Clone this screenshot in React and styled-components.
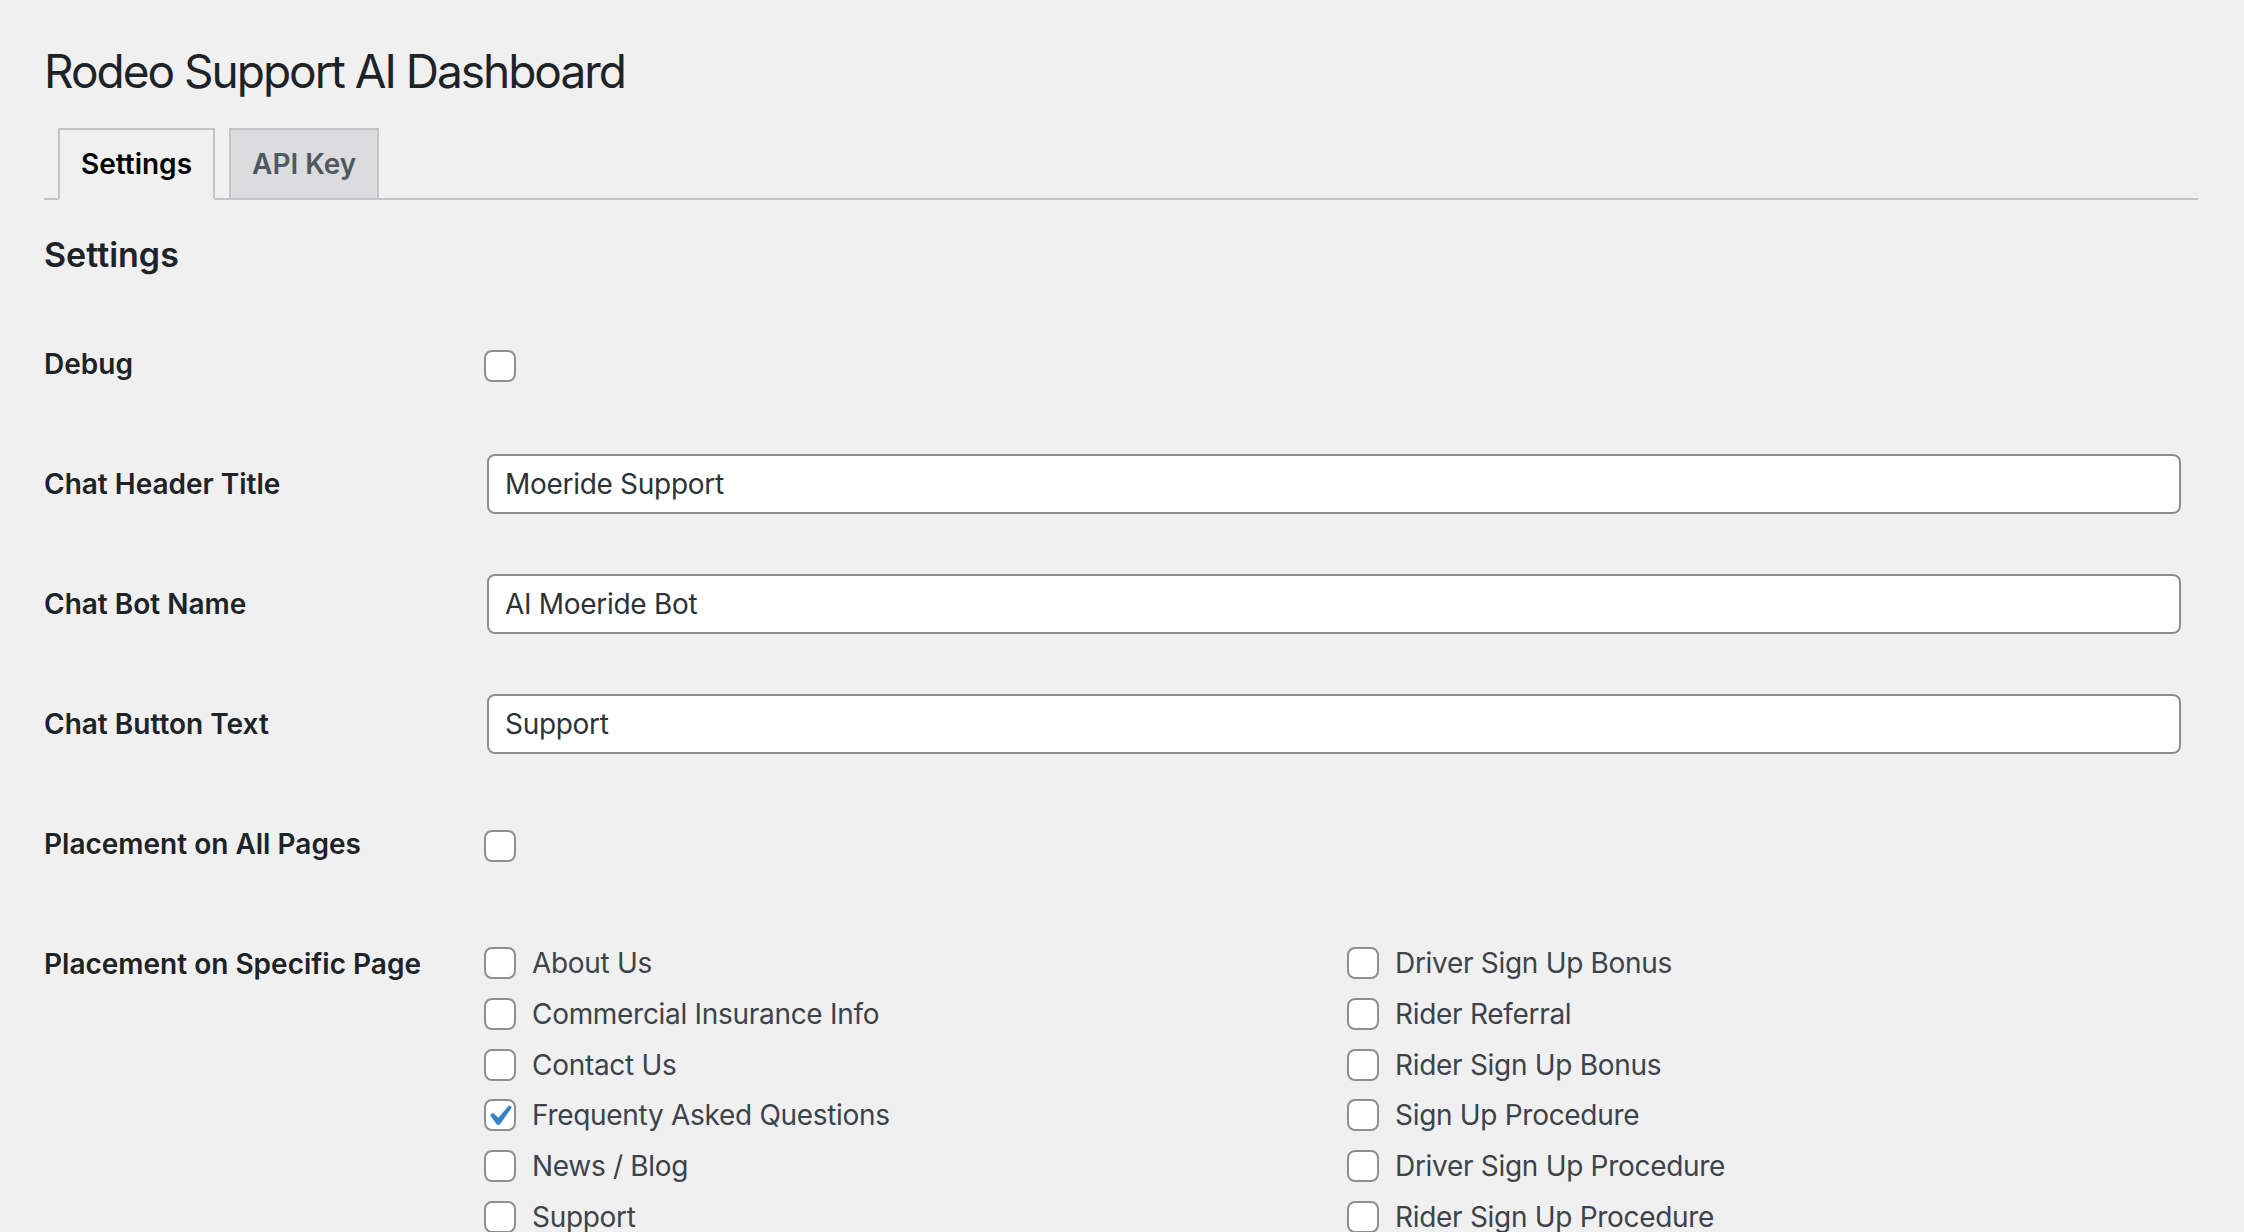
import styled, { createGlobalStyle } from 'styled-components';

const GlobalStyle = createGlobalStyle`
  html, body {
    margin: 0;
    background: #f0f0f1;
  }
  body {
    font-family: 'Inter', 'Liberation Sans', sans-serif;
    color: #3c434a;
  }
`;

const leftPages = [
  { name: 'About Us' },
  { name: 'Commercial Insurance Info' },
  { name: 'Contact Us' },
  { name: 'Frequenty Asked Questions', checked: true },
  { name: 'News / Blog' },
  { name: 'Support' },
];

const rightPages = [
  { name: 'Driver Sign Up Bonus' },
  { name: 'Rider Referral' },
  { name: 'Rider Sign Up Bonus' },
  { name: 'Sign Up Procedure' },
  { name: 'Driver Sign Up Procedure' },
  { name: 'Rider Sign Up Procedure' },
];

function Checkbox({ checked }) {
  return (
    <Box>
      {checked &&
        <Tick viewBox="0 0 20 20">
          <path d="M14.83 4.89l1.34.94-5.81 8.38H9.02L5.78 9.67l1.34-1.25 2.57 2.4z" fill="#3582c4" />
        </Tick>
      }
    </Box>
  );
}

function PageList({ pages }) {
  return (
    <Column>
      {pages.map((p) =>
        <Item key={p.name}>
          <Checkbox checked={p.checked} />
          <span>{p.name}</span>
        </Item>
      )}
    </Column>
  );
}

export default function App() {
  return (
    <>
      <GlobalStyle />
      <Wrap>
        <Title>Rodeo Support AI Dashboard</Title>
        <TabBar>
          <Tab $active>Settings</Tab>
          <Tab>API Key</Tab>
        </TabBar>
        <SectionTitle>Settings</SectionTitle>

        <Row>
          <Label>Debug</Label>
          <Field $check><Checkbox /></Field>
        </Row>
        <Row>
          <Label>Chat Header Title</Label>
          <Field $text><TextInput type="text" defaultValue="Moeride Support" /></Field>
        </Row>
        <Row>
          <Label>Chat Bot Name</Label>
          <Field $text><TextInput type="text" defaultValue="AI Moeride Bot" /></Field>
        </Row>
        <Row>
          <Label>Chat Button Text</Label>
          <Field $text><TextInput type="text" defaultValue="Support" /></Field>
        </Row>
        <Row>
          <Label>Placement on All Pages</Label>
          <Field $check><Checkbox /></Field>
        </Row>
        <Row>
          <Label>Placement on Specific Page</Label>
          <Field>
            <Columns>
              <PageList pages={leftPages} />
              <PageList pages={rightPages} />
            </Columns>
          </Field>
        </Row>
      </Wrap>
    </>
  );
}

const Wrap = styled.div`
  padding: 20px 46px 0 44px;
`;

const Title = styled.h1`
  margin: 0;
  padding: 22px 0 8px;
  font-size: 46px;
  line-height: 1.3;
  font-weight: 400;
  letter-spacing: -2px;
  color: #1d2327;
`;

const TabBar = styled.div`
  display: flex;
  padding-top: 18px;
  border-bottom: 2px solid #c3c4c7;
`;

const Tab = styled.div`
  margin-left: 14px;
  margin-bottom: ${(p) => (p.$active ? '-2px' : '0')};
  padding: 10px 21px;
  border: 2px solid #c3c4c7;
  border-bottom: ${(p) => (p.$active ? '2px solid #f0f0f1' : 'none')};
  background: ${(p) => (p.$active ? '#f0f0f1' : '#dcdcde')};
  color: ${(p) => (p.$active ? '#000' : '#50575e')};
  font-size: 28px;
  line-height: 48px;
  font-weight: 600;
`;

const SectionTitle = styled.h2`
  margin: 37px 0 31px;
  font-size: 34px;
  line-height: 36px;
  font-weight: 600;
  color: #1d2327;
`;

const Row = styled.div`
  display: grid;
  grid-template-columns: 420px 1fr;
  min-height: 120px;
`;

const Label = styled.div`
  padding: 42px 20px 38px 0;
  font-size: 28px;
  line-height: 36px;
  font-weight: 600;
  color: #1d2327;
`;

const Field = styled.div`
  padding: ${(p) => (p.$check ? '46px 20px 30px 20px' : p.$text ? '30px 17px 30px 23px' : '30px 20px')};
`;

const TextInput = styled.input`
  display: block;
  box-sizing: border-box;
  width: 100%;
  height: 60px;
  margin: 0;
  padding: 0 16px;
  border: 2px solid #8c8f94;
  border-radius: 8px;
  background: #fff;
  color: #2c3338;
  font-family: inherit;
  font-size: 28px;
  letter-spacing: -0.3px;
  outline: none;
`;

const Box = styled.span`
  position: relative;
  display: block;
  box-sizing: border-box;
  width: 32px;
  height: 32px;
  flex-shrink: 0;
  border: 2px solid #8c8f94;
  border-radius: 8px;
  background: #fff;
`;

const Tick = styled.svg`
  position: absolute;
  top: -6px;
  left: -8px;
  width: 42px;
  height: 42px;
`;

const Columns = styled.div`
  display: grid;
  grid-template-columns: 863px 1fr;
  padding-top: 4px;
`;

const Column = styled.div`
  display: flex;
  flex-direction: column;
`;

const Item = styled.div`
  display: flex;
  align-items: center;
  gap: 16px;
  height: 50.7px;
  font-size: 28px;
  letter-spacing: -0.3px;
  color: #3c434a;
`;
